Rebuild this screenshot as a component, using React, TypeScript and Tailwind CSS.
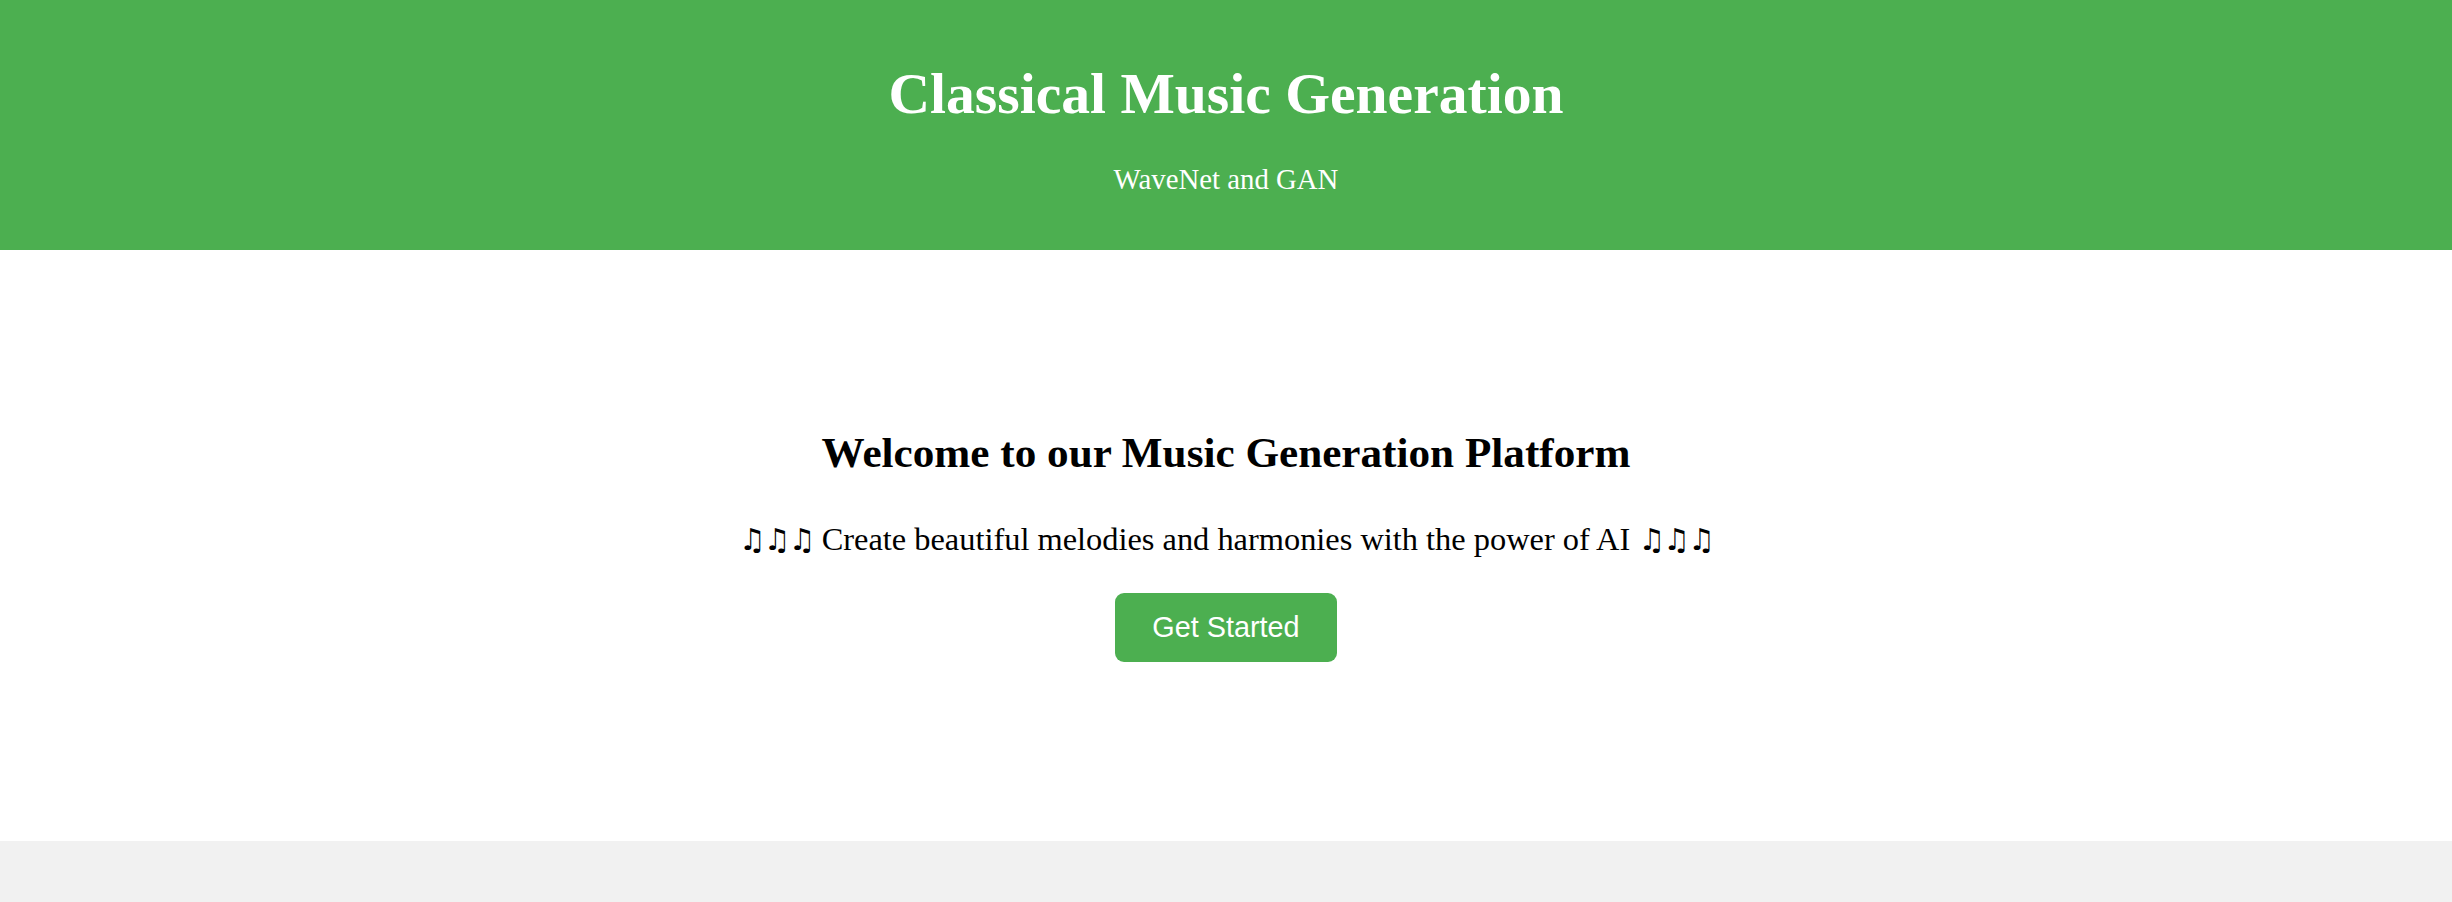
/**
 * Landing page: green header, hero block with call to action
 */

const Notes = () => (
  <span className="font-['DejaVu_Sans',sans-serif] font-bold text-[30px] tracking-[-2px]">♫♫♫</span>
);

export default function App() {
  return (
    <div className="min-h-[902px] bg-[#f1f1f1] font-['Liberation_Serif',serif]">
      {/* Header */}
      <header className="h-[250px] bg-[#4caf50] text-white text-center pt-[61px]">
        <h1 className="text-[57.6px] leading-[66px] font-bold">Classical Music Generation</h1>
        <p className="mt-[36px] text-[28.8px] leading-[33px]">WaveNet and GAN</p>
      </header>

      {/* Hero */}
      <section className="h-[591px] bg-white flex flex-col items-center text-center pt-[178px] text-black">
        <h2 className="text-[43.2px] leading-[50px] font-bold">Welcome to our Music Generation Platform</h2>
        <p className="mt-[42px] text-[32.4px] leading-[38px]">
          <Notes /> Create beautiful melodies and harmonies with the power of AI <Notes />
        </p>
        <button className="mt-[34px] h-[69px] px-[37px] rounded-[9px] bg-[#4caf50] text-white text-[28.8px] font-['Liberation_Sans',sans-serif]">
          Get Started
        </button>
      </section>
    </div>
  );
}
